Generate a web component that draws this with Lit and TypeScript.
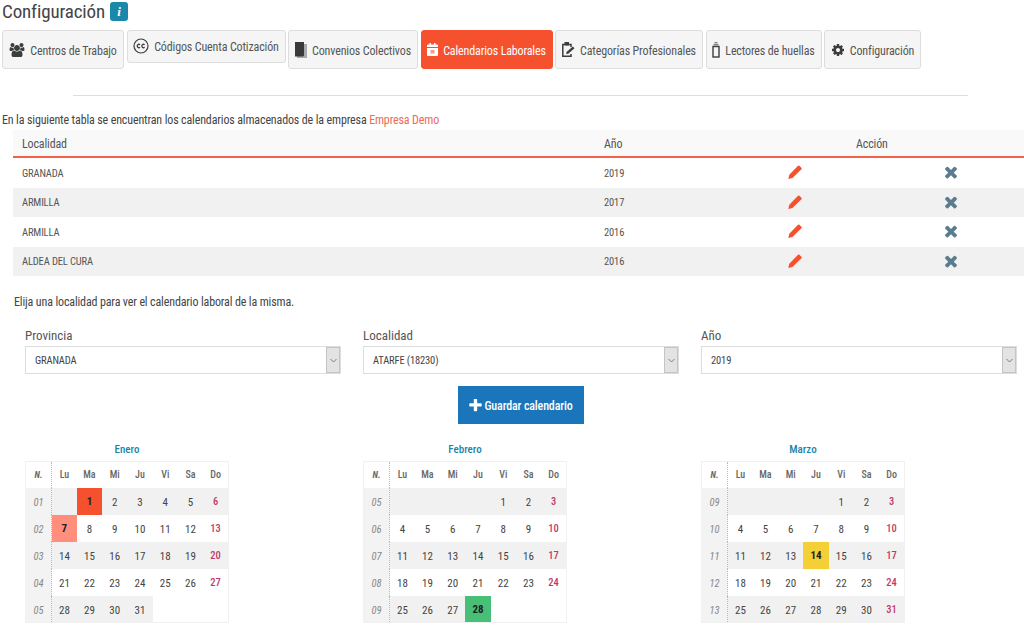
import { LitElement, html, css } from "lit";
import { customElement } from "lit/decorators.js";

const P = {
  users: "M593 896q-162 5-265 128h-134q-82 0-138-40.500t-56-118.500q0-353 124-353 6 0 43.500 21t97.500 42.500 119 21.500q67 0 133-23-5 37-5 66 0 139 81 256zm1071 637q0 120-73 189.500t-194 69.500h-874q-121 0-194-69.500t-73-189.500q0-53 3.500-103.500t14-109 26.500-108.500 43-97.500 62-81 85.500-53.500 111.500-20q10 0 43 21.500t73 48 107 48 135 21.500 135-21.500 107-48 73-48 43-21.500q61 0 111.500 20t85.500 53.500 62 81 43 97.500 26.500 108.500 14 109 3.500 103.500zm-1024-1277q0 106-75 181t-181 75-181-75-75-181 75-181 181-75 181 75 75 181zm704 384q0 159-112.500 271.500t-271.500 112.500-271.500-112.500-112.500-271.500 112.500-271.500 271.500-112.500 271.500 112.500 112.500 271.500zm576 225q0 78-56 118.500t-138 40.500h-134q-103-123-265-128 81-117 81-256 0-29-5-66 66 23 133 23 59 0 119-21.500t97.500-42.500 43.500-21q124 0 124 353zm-128-609q0 106-75 181t-181 75-181-75-75-181 75-181 181-75 181 75 75 181z",
  cog: "M1152 896q0-106-75-181t-181-75-181 75-75 181 75 181 181 75 181-75 75-181zm512-109v222q0 12-8 23t-20 13l-185 28q-19 54-39 91 35 50 107 138 10 12 10 25t-9 23q-27 37-99 108t-94 71q-12 0-26-9l-138-108q-44 23-91 38-16 136-29 186-7 28-36 28h-222q-14 0-24.500-8.500t-11.500-21.500l-28-184q-49-16-90-37l-141 107q-10 9-25 9-14 0-25-11-126-114-165-168-7-10-7-23 0-12 8-23 15-21 51-66.500t54-70.500q-27-50-41-99l-183-27q-13-2-21-12.500t-8-23.500v-222q0-12 8-23t19-13l186-28q14-46 39-92-40-57-107-138-10-12-10-24 0-10 9-23 26-36 98.500-107.500t94.500-71.500q13 0 26 10l138 107q44-23 91-38 16-136 29-186 7-28 36-28h222q14 0 24.500 8.500t11.500 21.500l28 184q49 16 90 37l142-107q9-9 24-9 13 0 25 10 129 119 165 170 7 8 7 22 0 12-8 23-15 21-51 66.500t-54 70.500q26 50 41 98l183 28q13 2 21 12.500t8 23.500z",
  times: "M1490 1322q0 40-28 68l-136 136q-28 28-68 28t-68-28l-294-294-294 294q-28 28-68 28t-68-28l-136-136q-28-28-28-68t28-68l294-294-294-294q-28-28-28-68t28-68l136-136q28-28 68-28t68 28l294 294 294-294q28-28 68-28t68 28l136 136q28 28 28 68t-28 68l-294 294 294 294q28 28 28 68z",
  plus: "M1600 736v192q0 40-28 68t-68 28h-416v416q0 40-28 68t-68 28h-192q-40 0-68-28t-28-68v-416h-416q-40 0-68-28t-28-68v-192q0-40 28-68t68-28h416v-416q0-40 28-68t68-28h192q40 0 68 28t28 68v416h416q40 0 68 28t28 68z",
};

const icons: Record<string, unknown> = {
  users: html`<svg class="ic" width="16" height="14" viewBox="0 0 1920 1792"><path d=${P.users} fill="currentColor"/></svg>`,
  cog: html`<svg class="ic" width="14" height="14" viewBox="0 0 1792 1792"><path d=${P.cog} fill="currentColor"/></svg>`,
  cc: html`<svg class="ic" width="16" height="16" viewBox="0 0 16 16" fill="none" stroke="currentColor">
    <circle cx="8" cy="8" r="7" stroke-width="1.200"/>
    <path d="M7 6.700a1.700 1.700 0 1 0 0 2.600M11.600 6.700a1.700 1.700 0 1 0 0 2.600" stroke-width="1.300"/></svg>`,
  files: html`<svg class="ic" width="12" height="16" viewBox="0 0 12 16">
    <rect x="2" y="2" width="10" height="14" fill="#aaa"/><path d="M0 0h9v13.500l-1 1H0z" fill="#3b3a3a"/></svg>`,
  cal: html`<svg class="ic" width="11" height="13" viewBox="0 0 11 13">
    <path d="M1 1.500h1.500V0H4v1.500h3V0h1.500v1.500H10a1 1 0 0 1 1 1V4H0V2.500a1 1 0 0 1 1-1zM0 5h11v7a1 1 0 0 1-1 1H1a1 1 0 0 1-1-1z" fill="currentColor"/>
    <rect x="3.500" y="7" width="4" height="3.500" fill="#f79a85"/></svg>`,
  clip: html`<svg class="ic" width="13" height="15" viewBox="0 0 13 15" fill="none">
    <path d="M9 5V2.500H.8v11.700H9V12" stroke="currentColor" stroke-width="1.500"/>
    <rect x="2.500" y="0" width="4.500" height="3.500" fill="currentColor"/>
    <path d="M4.500 10L10.800 4.500l1.700 1.700-6.200 5.500-2 .3z" fill="currentColor"/></svg>`,
  mobile: html`<svg class="ic" width="8" height="16" viewBox="0 0 8 16" fill="none" stroke="currentColor">
    <rect x="1" y="4.500" width="6" height="10.500" stroke-width="1.400"/>
    <path d="M2.500 .8h3M1.500 2.800h5" stroke-width=".9"/></svg>`,
};

const tabs = [
  { t: "Centros de Trabajo", i: "users", w: 122 },
  { t: "Códigos Cuenta Cotización", i: "cc", w: 159, short: true },
  { t: "Convenios Colectivos", i: "files", w: 130 },
  { t: "Calendarios Laborales", i: "cal", w: 132, active: true },
  { t: "Categorías Profesionales", i: "clip", w: 148 },
  { t: "Lectores de huellas", i: "mobile", w: 116 },
  { t: "Configuración", i: "cog", w: 97 },
];

const rows = [
  ["GRANADA", "2019"],
  ["ARMILLA", "2017"],
  ["ARMILLA", "2016"],
  ["ALDEA DEL CURA", "2016"],
];

type Month = { n: string; start: number; days: number; weeks: string[]; marks: Record<number, string> };
const months: Month[] = [
  { n: "Enero", start: 1, days: 31, weeks: ["01", "02", "03", "04", "05"], marks: { 1: "red", 7: "salmon" } },
  { n: "Febrero", start: 4, days: 28, weeks: ["05", "06", "07", "08", "09"], marks: { 28: "green" } },
  { n: "Marzo", start: 4, days: 31, weeks: ["09", "10", "11", "12", "13"], marks: { 14: "yellow" } },
];
const dows = ["Lu", "Ma", "Mi", "Ju", "Vi", "Sa", "Do"];

function weeksOf(m: Month): (number | null)[][] {
  const cells: (number | null)[] = Array(m.start).fill(null);
  for (let d = 1; d <= m.days; d++) cells.push(d);
  const out: (number | null)[][] = [];
  for (let i = 0; i < cells.length; i += 7) out.push(cells.slice(i, i + 7));
  return out;
}

@customElement("app-root")
export class AppRoot extends LitElement {
  static styles = css`
    :host { display: block; width: 1024px; height: 625px; overflow: hidden; background: #fff; color: #555;
      font-family: Roboto, "Liberation Sans", sans-serif; font-size: 12px; font-stretch: 85%; letter-spacing: -0.14px; }
    .ic { flex: none; display: block; }
    h1 { margin: 0; height: 30px; padding: 0 0 0 2px; display: flex; align-items: flex-start; gap: 5px;
      font-weight: 400; font-size: 19px; line-height: 24px; color: #444; }
    .info { width: 18px; height: 19px; margin-top: 2px; border-radius: 3px; background: #1a88ab; color: #fff;
      font: italic 700 13px/19px "Liberation Serif", serif; text-align: center; }
    .tabs { display: flex; align-items: flex-start; padding-left: 2px; height: 39px; }
    .tab { box-sizing: border-box; height: 39px; padding-top: 2px; display: flex; align-items: center; justify-content: center; gap: 5px;
      border: 1px solid #ddd; border-radius: 3px; background: #f5f5f5; color: #555; white-space: nowrap; }
    .tab.short { height: 33px; padding-top: 1px; }
    .tab.active { background: #f5512f; border-color: #f5512f; color: #fff; }
    .tab svg { color: #3d3d3d; margin-top: -2px; }
    .tab.active svg { color: #fff; }
    .sp { margin-right: 2.500px; }
    hr { border: 0; height: 1px; background: #ddd; margin: 26px 56px 0 73px; }
    .intro { margin: 16px 0 0 2px; line-height: 16px; color: #444; height: 18px; }
    .intro span { color: #ee6a5a; }
    .tbl { margin-left: 13px; }
    .thead { display: grid; grid-template-columns: 582px 214px 1fr; height: 26px; line-height: 28px; background: #f9f9f9;
      border-bottom: 2px solid #f5604a; padding-left: 9px; color: #555; }
    .thead .acc { padding-left: 38px; }
    .row { box-sizing: border-box; display: grid; grid-template-columns: 582px 184px 156px 1fr; height: 29.500px; align-items: center;
      padding: 1px 0 0 9px; font-size: 10.500px; color: #555; }
    .row:nth-child(even) { background: #f1f1f1; }
    .row svg { display: block; margin-top: -2px; }
    .elija { margin: 18px 0 0 14px; line-height: 16px; color: #444; height: 33px; }
    .cols { display: grid; grid-template-columns: repeat(3, 316px); column-gap: 22px; padding-left: 25px; }
    .lab { font-size: 13px; line-height: 16px; height: 18px; padding-top: 1px; color: #555; letter-spacing: 0; }
    .sel { box-sizing: border-box; height: 28px; border: 1px solid #ddd; display: flex; justify-content: space-between;
      align-items: stretch; font-size: 10.500px; color: #444; padding-left: 9px; line-height: 28px; }
    .arrow { width: 12px; background: #e3e3e3; border: 1px solid #c4c4c4; display: flex; align-items: center; justify-content: center; }
    .btnwrap { display: flex; justify-content: center; margin-top: 12px; padding-left: 18px; }
    .btn { box-sizing: border-box; width: 126px; height: 38px; padding-top: 1px; background: #1a75bb; color: #fff; display: flex; align-items: center; justify-content: center;
      gap: 2px; font-weight: 500; font-size: 12px; }
    .mt { text-align: center; color: #1a84a8; font-size: 11px; font-weight: 500; line-height: 14px; height: 18px; margin: 19px 0 0 0; width: 204px; letter-spacing: 0; }
    table { border-collapse: collapse; table-layout: fixed; width: 204px; font-size: 11px; border: 1px solid #f1f1f1; letter-spacing: 0; }
    th, td { box-sizing: border-box; padding: 3px 0 0; height: 27px; text-align: center; vertical-align: middle; color: #444; font-weight: 400; }
    th { font-size: 10px; font-weight: 500; color: #666; height: 26px; padding: 0; }
    .w { width: 26px; background: #f3f3f3; border-right: 1px dotted #bbb; font-style: italic; color: #888; font-size: 10.500px; }
    th.w { background: #fff; font-weight: 700; font-size: 9px; color: #666; }
    tbody tr:nth-child(odd) td.fill { background: #f1f1f1; }
    td.su { color: #bf3a6b; font-weight: 500; font-size: 10.500px; padding: 1px 0 0; }
    tbody tr td.fill.red { background: #f5512f; font-weight: 700; color: #222; padding: 1px 0 0; }
    tbody tr td.fill.salmon { background: #ff8f7c; font-weight: 700; color: #222; padding: 1px 0 0; }
    tbody tr td.fill.green { background: #47bf77; font-weight: 700; color: #222; padding: 1px 0 0; }
    tbody tr td.fill.yellow { background: #f4cf35; font-weight: 700; color: #222; padding: 1px 0 0; }
  `;

  private pencil() {
    return html`<svg width="14" height="14" viewBox="0 0 14 14"><path d="M10 .8a1 1 0 0 1 1.400 0l2 2a1 1 0 0 1 0 1.400L4.500 12.900.3 13.900l1-4.200z" fill="#f5512f"/></svg>`;
  }

  private month(m: Month) {
    return html`<div>
      <div class="mt">${m.n}</div>
      <table>
        <colgroup><col style="width:26px" />${dows.map(() => html`<col />`)}</colgroup>
        <thead><tr><th class="w">N.</th>${dows.map((d) => html`<th>${d}</th>`)}</tr></thead>
        <tbody>
          ${weeksOf(m).map((wk, i) => html`<tr>
            <td class="w">${m.weeks[i]}</td>
            ${dows.map((_, j) => {
              const d = wk[j];
              if (j >= wk.length) return html`<td></td>`;
              const mk = d ? m.marks[d] ?? "" : "";
              return html`<td class="fill ${j === 6 ? "su" : ""} ${mk}">${d ?? ""}</td>`;
            })}
          </tr>`)}
        </tbody>
      </table>
    </div>`;
  }

  render() {
    return html`
      <h1>Configuración <span class="info">i</span></h1>
      <div class="tabs">
        ${tabs.map((t, i) => html`<div class="tab ${t.short ? "short" : ""} ${t.active ? "active" : ""} ${i < 6 ? "sp" : ""}" style="width:${t.w}px">${icons[t.i]}<span>${t.t}</span></div>`)}
      </div>
      <hr />
      <div class="intro">En la siguiente tabla se encuentran los calendarios almacenados de la empresa <span>Empresa Demo</span></div>
      <div class="tbl">
        <div class="thead"><div>Localidad</div><div>Año</div><div class="acc">Acción</div></div>
        <div>
          ${rows.map((r) => html`<div class="row">
            <div>${r[0]}</div><div>${r[1]}</div>
            <div>${this.pencil()}</div>
            <div><svg width="14" height="14" viewBox="0 0 1792 1792"><path d=${P.times} fill="#5b7c8f" transform="translate(-250 -250) scale(1.280)"/></svg></div>
          </div>`)}
        </div>
      </div>
      <div class="elija">Elija una localidad para ver el calendario laboral de la misma.</div>
      <div class="cols">
        ${[["Provincia", "GRANADA"], ["Localidad", "ATARFE (18230)"], ["Año", "2019"]].map(([l, v]) => html`<div>
          <div class="lab">${l}</div>
          <div class="sel"><span>${v}</span><span class="arrow"><svg width="7" height="5" viewBox="0 0 7 5" fill="none"><path d="M.5 1l3 3 3-3" stroke="#666" stroke-width=".8"/></svg></span></div>
        </div>`)}
      </div>
      <div class="btnwrap"><div class="btn"><svg width="13" height="13" viewBox="0 0 1792 1792"><path d=${P.plus} fill="#fff" transform="translate(-200 -200) scale(1.220)"/></svg><span>Guardar calendario</span></div></div>
      <div class="cols">${months.map((m) => this.month(m))}</div>
    `;
  }
}
